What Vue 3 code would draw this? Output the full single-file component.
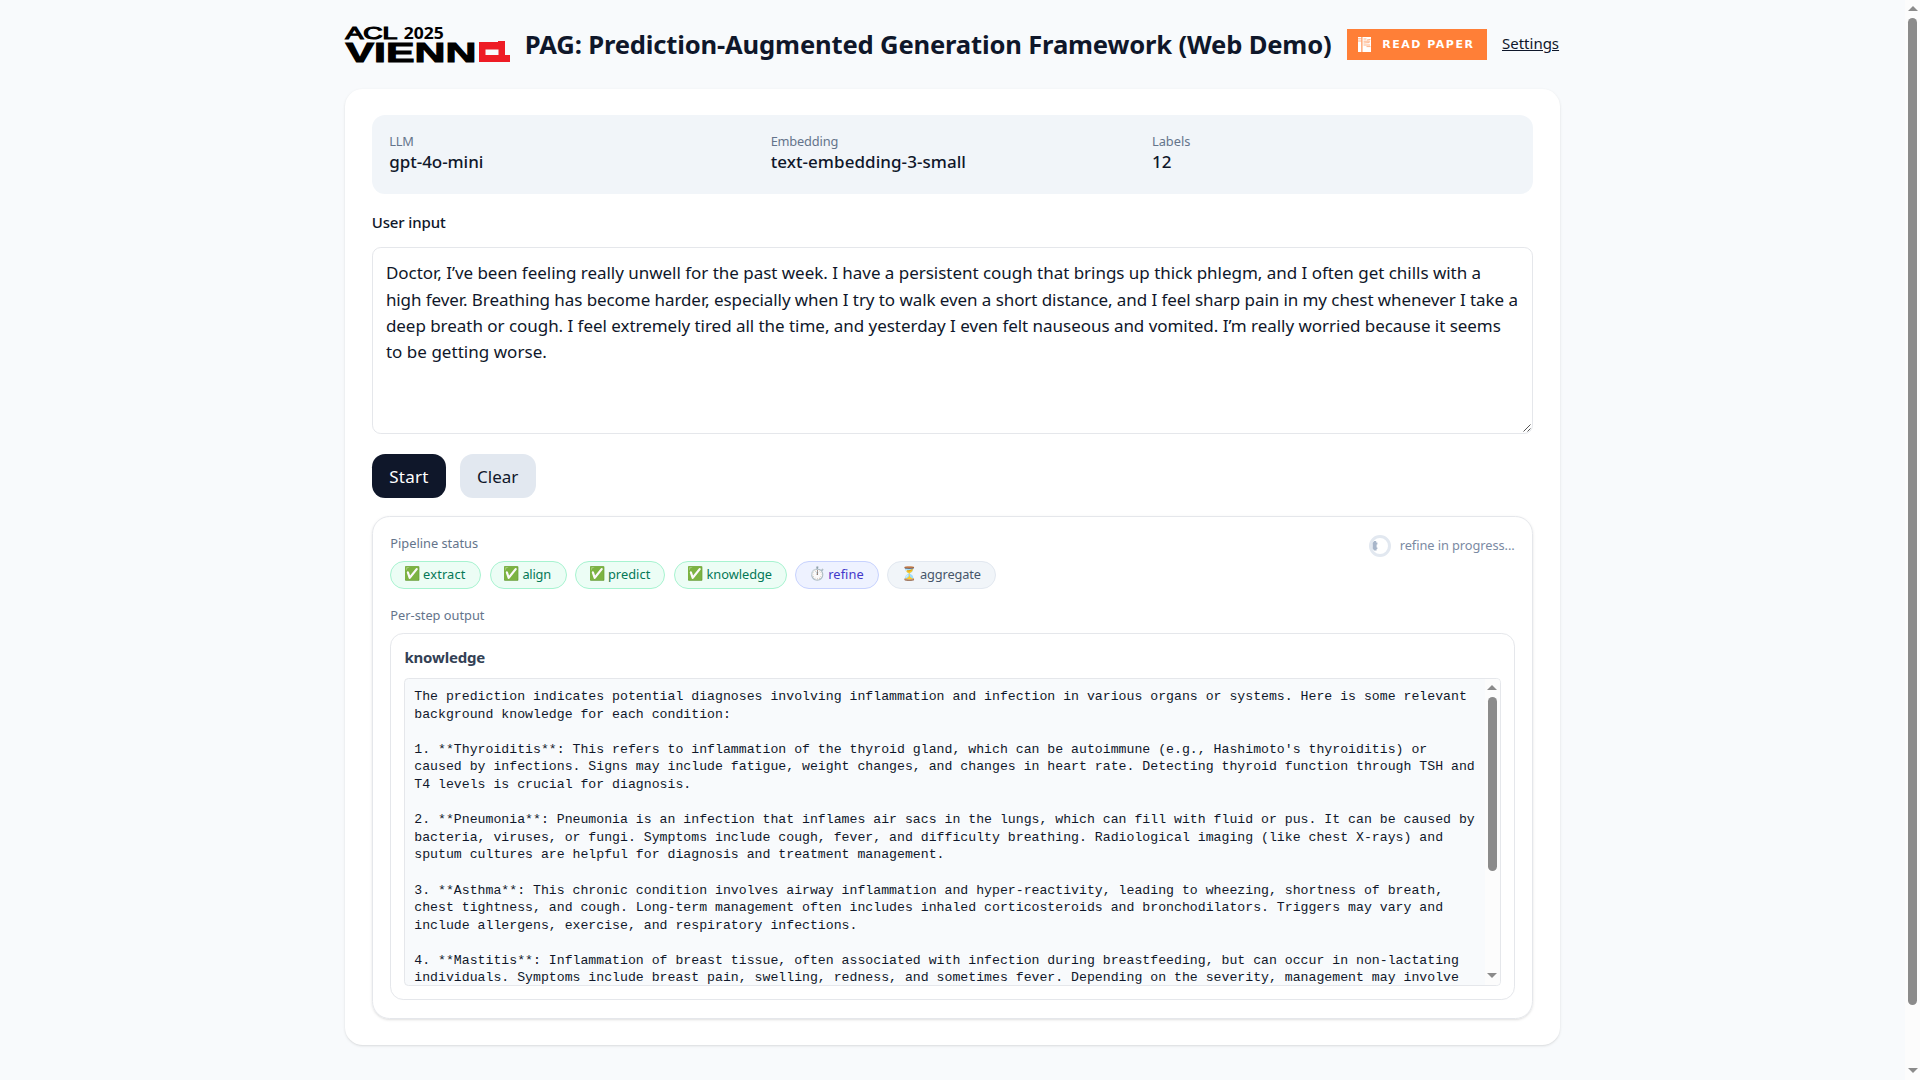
<script setup>
const input = [
  { text: 'Doctor, I’ve been feeling really unwell for the past week. I have a persistent cough that brings up thick phlegm, and I often get chills with a', ls: -0.029 },
  { text: 'high fever. Breathing has become harder, especially when I try to walk even a short distance, and I feel sharp pain in my chest whenever I take a', ls: -0.076 },
  { text: 'deep breath or cough. I feel extremely tired all the time, and yesterday I even felt nauseous and vomited. I’m really worried because it seems', ls: -0.037 },
  { text: 'to be getting worse.', ls: 0.033 }
]

const steps = [
  { name: 'extract', icon: '✅', state: 'done', width: 90.8, ls: 0.16 },
  { name: 'align', icon: '✅', state: 'done', width: 77, ls: -0.2 },
  { name: 'predict', icon: '✅', state: 'done', width: 90.2, ls: 0.06 },
  { name: 'knowledge', icon: '✅', state: 'done', width: 113.2, ls: -0.03 },
  { name: 'refine', icon: '⏱️', state: 'running', width: 83.2, ls: 0.07 },
  { name: 'aggregate', icon: '⏳', state: 'waiting', width: 109, ls: -0.12 }
]

const output = `The prediction indicates potential diagnoses involving inflammation and infection in various organs or systems. Here is some relevant
background knowledge for each condition:

1. **Thyroiditis**: This refers to inflammation of the thyroid gland, which can be autoimmune (e.g., Hashimoto's thyroiditis) or
caused by infections. Signs may include fatigue, weight changes, and changes in heart rate. Detecting thyroid function through TSH and
T4 levels is crucial for diagnosis.

2. **Pneumonia**: Pneumonia is an infection that inflames air sacs in the lungs, which can fill with fluid or pus. It can be caused by
bacteria, viruses, or fungi. Symptoms include cough, fever, and difficulty breathing. Radiological imaging (like chest X-rays) and
sputum cultures are helpful for diagnosis and treatment management.

3. **Asthma**: This chronic condition involves airway inflammation and hyper-reactivity, leading to wheezing, shortness of breath,
chest tightness, and cough. Long-term management often includes inhaled corticosteroids and bronchodilators. Triggers may vary and
include allergens, exercise, and respiratory infections.

4. **Mastitis**: Inflammation of breast tissue, often associated with infection during breastfeeding, but can occur in non-lactating
individuals. Symptoms include breast pain, swelling, redness, and sometimes fever. Depending on the severity, management may involve`
</script>

<template>
  <div class="page">
    <div class="content">
      <header class="header">
        <svg class="logo" width="166" height="38" viewBox="0 0 166 38">
          <g class="logo-text">
            <text x="0.5" y="13.6" font-size="17" textLength="52" lengthAdjust="spacingAndGlyphs" class="acl">ACL</text>
            <text x="58.8" y="13.6" font-size="16.6" textLength="40" lengthAdjust="spacingAndGlyphs" class="year">2025</text>
            <text x="0.5" y="36.6" font-size="27.6" textLength="131" lengthAdjust="spacingAndGlyphs" class="vienn">VIENN</text>
          </g>
          <g fill="#ee1c25">
            <rect x="134" y="17" width="26" height="20" />
            <rect x="153" y="16" width="7" height="3" />
            <rect x="159" y="30" width="6" height="7" />
          </g>
          <rect x="140.5" y="24.5" width="13" height="5.5" fill="#f8fafc" />
        </svg>
        <h1>PAG: Prediction-Augmented Generation Framework (Web Demo)</h1>
        <a class="badge">
          <svg width="13" height="15" viewBox="0 0 13 15">
            <path fill="#fff" d="M0 0h3.400v15H0zM4.400 0H13v15H4.400z" />
            <path stroke="#ff7f37" stroke-width=".6" fill="none" d="M0 1.800h3.400M0 4h3.400M5.500 2h3M9 3l3.500-.6M5.500 4.200h6.500M5.500 6l6-.4M5.500 8h6.500M8.500 9.600h4" />
          </svg>
          <span>READ PAPER</span>
        </a>
        <a class="settings">Settings</a>
      </header>

      <main class="card">
        <section class="info">
          <div><div class="label llm">LLM</div><div class="value">gpt-4o-mini</div></div>
          <div><div class="label emb">Embedding</div><div class="value wide">text-embedding-3-small</div></div>
          <div><div class="label">Labels</div><div class="value">12</div></div>
        </section>

        <div class="field-label">User input</div>
        <div class="textarea">
          <div v-for="line in input" :key="line.text" :style="{ letterSpacing: line.ls + 'px' }">{{ line.text }}</div>
          <svg class="grip" width="8" height="8" viewBox="0 0 8 8"><path d="M.5 7.500l7-7M4.500 7.500l3-3" stroke="#555" fill="none" /></svg>
        </div>

        <div class="buttons">
          <button class="start">Start</button>
          <button class="clear">Clear</button>
        </div>

        <section class="panel">
          <div class="status">
            <div>
              <div class="caption">Pipeline status</div>
              <div class="pills">
                <span v-for="s in steps" :key="s.name" class="pill" :class="s.state" :style="{ width: s.width + 'px', letterSpacing: s.ls + 'px' }">
                  <span class="emoji">{{ s.icon }}</span><span>{{ s.name }}</span>
                </span>
              </div>
            </div>
            <div class="progress">
              <svg width="22" height="22" viewBox="0 0 22 22">
                <circle cx="11" cy="11" r="9.500" fill="none" stroke="#e2e8f0" stroke-width="3" />
                <path d="M5.200 6h2v1.500h1.200v2H7.600v3h.8v1.500H7.600v1.500H5.200l-1.600-2V8z" fill="#a8b6ca" />
              </svg>
              <span>refine in progress...</span>
            </div>
          </div>

          <div class="caption output-caption">Per-step output</div>
          <div class="output">
            <div class="output-title">knowledge</div>
            <div class="log">
              <pre>{{ output }}</pre>
              <div class="scroll">
                <i class="up"></i><i class="thumb"></i><i class="down"></i>
              </div>
            </div>
          </div>
        </section>
      </main>
    </div>
    <div class="scroll page-scroll">
      <i class="up"></i><i class="thumb"></i><i class="down"></i>
    </div>
  </div>
</template>

<style>
body {
  margin: 0;
  background: #f8fafc;
}
</style>

<style scoped>
* {
  box-sizing: border-box;
}
.page {
  display: flex;
  height: 1080px;
  overflow: hidden;
  background: #f8fafc;
  color: #0f172a;
  font-family: "Noto Sans", sans-serif;
}
.content {
  flex: 1;
  padding: 0 345.3px;
}
.header {
  display: flex;
  align-items: center;
  height: 88.8px;
  white-space: nowrap;
}
.logo {
  width: 166px;
  flex: none;
  overflow: visible;
}
.logo-text {
  fill: #000;
}
.acl {
  font-family: "Liberation Sans", sans-serif;
  stroke: #000;
  stroke-width: 1.1px;
}
.year {
  font-family: "Noto Sans", sans-serif;
  font-weight: 700;
}
.vienn {
  font-family: "Liberation Sans", sans-serif;
  font-weight: 700;
  stroke: #000;
  stroke-width: 1px;
}
h1 {
  width: 806px;
  margin: 2px 16px 0 13.5px;
  font-size: 25.6px;
  line-height: 36px;
  font-weight: 700;
  letter-spacing: -0.165px;
}
.badge {
  display: flex;
  align-items: center;
  width: 140px;
  height: 31px;
  padding-left: 11px;
  margin-top: 1px;
  background: #ff7f37;
  color: #fff;
  font: 700 11px/31px "DejaVu Sans", sans-serif;
  letter-spacing: 1.5px;
}
.badge svg {
  margin-right: 11.5px;
}
.settings {
  margin: -2px 0 0 15.2px;
  font-size: 15px;
  line-height: 22px;
  text-decoration: underline;
}
.card {
  height: 956.7px;
  padding: 26.4px;
  background: #fff;
  border-radius: 17.6px;
  box-shadow: 0 1px 3px rgba(0, 0, 0, 0.1), 0 1px 2px -1px rgba(0, 0, 0, 0.1);
}
.info {
  display: grid;
  grid-template-columns: repeat(3, 1fr);
  gap: 17.6px;
  height: 78.5px;
  padding: 17.6px;
  background: #f1f5f9;
  border-radius: 13.2px;
}
.label {
  color: #64748b;
  font-size: 12.8px;
  line-height: 17px;
}
.llm,
.emb {
  letter-spacing: -0.17px;
}
.value {
  font-size: 17px;
  line-height: 24px;
  font-weight: 500;
  letter-spacing: -0.05px;
}
.value.wide {
  letter-spacing: 0.06px;
}
.field-label {
  margin: 17.5px 0 14px;
  font-size: 15px;
  line-height: 22px;
  font-weight: 500;
  letter-spacing: -0.11px;
}
.textarea {
  position: relative;
  height: 187px;
  padding: 12px 13.2px;
  border: 1px solid #e5e7eb;
  border-radius: 8.8px;
  font-size: 17px;
  line-height: 26.4px;
  white-space: nowrap;
}
.grip {
  position: absolute;
  right: 1px;
  bottom: 1px;
}
.buttons {
  display: flex;
  gap: 13.5px;
  margin: 20px 0 18px;
}
button {
  height: 44px;
  padding: 0;
  border: 0;
  border-radius: 13.2px;
  font: 400 17px/43px "Noto Sans", sans-serif;
}
.start {
  width: 74.5px;
  background: #0f172a;
  color: #fff;
  letter-spacing: 0.26px;
}
.clear {
  width: 76px;
  background: #e2e8f0;
  color: #0f172a;
}
.panel {
  height: 502.8px;
  padding: 17px 17.6px;
  border: 1px solid #e5e7eb;
  border-radius: 17.6px;
  box-shadow: 0 1px 3px rgba(0, 0, 0, 0.1), 0 1px 2px -1px rgba(0, 0, 0, 0.1);
}
.status {
  display: flex;
  justify-content: space-between;
}
.caption {
  color: #64748b;
  font-size: 12.8px;
  line-height: 18px;
}
.pills {
  display: flex;
  gap: 8.5px;
  margin-top: 9px;
}
.pill {
  display: flex;
  align-items: center;
  height: 28px;
  padding: 0 0 2px 13px;
  border: 1px solid;
  border-radius: 14px;
  font-size: 12.8px;
  line-height: 18px;
}
.emoji {
  width: 18.8px;
  flex: none;
  font-family: "Noto Color Emoji", sans-serif;
  font-size: 13.2px;
  line-height: 18px;
  letter-spacing: 0;
}
.done {
  color: #047857;
  background: #ecfdf5;
  border-color: #a7f3d0;
}
.running {
  color: #4338ca;
  background: #eef2ff;
  border-color: #c7d2fe;
}
.waiting {
  color: #475569;
  background: #f1f5f9;
  border-color: #e2e8f0;
}
.progress {
  display: flex;
  height: 22px;
  gap: 9px;
  margin-top: 1px;
  color: #7b8aa3;
  font-size: 12.8px;
  line-height: 20px;
  letter-spacing: -0.06px;
}
.output-caption {
  margin: 17px 0 9px;
}
.output {
  height: 366.4px;
  padding: 11.5px 13.2px;
  border: 1px solid #e5e7eb;
  border-radius: 13.2px;
}
.output-title {
  margin-bottom: 10.5px;
  color: #334155;
  font-size: 15px;
  line-height: 22px;
  font-weight: 700;
  letter-spacing: -0.2px;
}
.log {
  display: flex;
  height: 308px;
  overflow: hidden;
  background: #f8fafc;
  border: 1px solid #e5e7eb;
  border-radius: 4.4px;
}
pre {
  flex: 1;
  margin: 0;
  padding: 8.8px;
  font: 13.2px/17.6px "Liberation Mono", monospace;
}
.scroll {
  display: flex;
  flex-direction: column;
  align-items: center;
  flex: none;
  width: 15px;
  padding: 6px 0 7px;
  background: #fcfcfc;
}
.up,
.down {
  border: 5px solid transparent;
  border-top-width: 0;
  border-bottom: 5px solid #8b8b8b;
}
.down {
  margin-top: auto;
  transform: rotate(180deg);
}
.thumb {
  width: 9px;
  height: 174px;
  margin-top: 7px;
  border-radius: 5px;
  background: #8b8b8b;
}
.page-scroll .thumb {
  height: 987px;
}
</style>
